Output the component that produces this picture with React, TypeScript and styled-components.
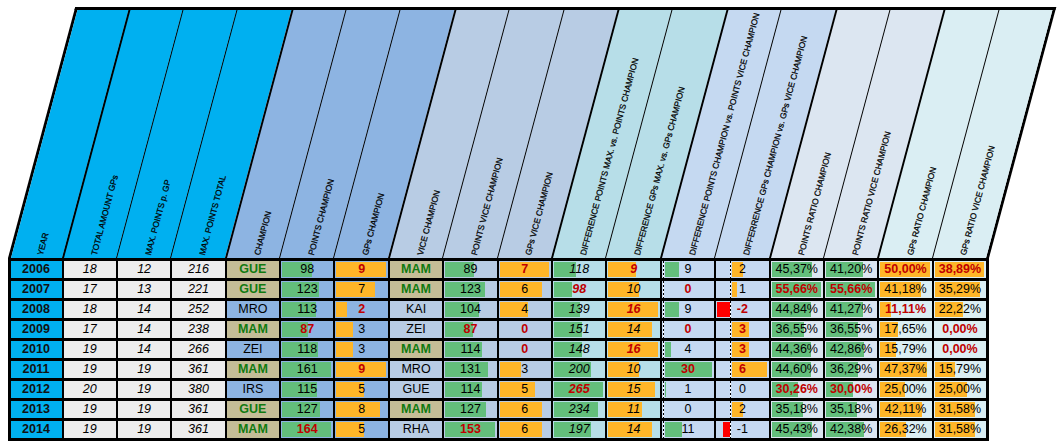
import React from 'react';
import styled, { createGlobalStyle } from 'styled-components';

const GlobalStyle = createGlobalStyle`
  html, body { margin: 0; padding: 0; background: #ffffff; }
  body { font-family: "Liberation Sans", Arial, sans-serif; }
  #root { width: 1060px; height: 448px; }
`;

const COL0 = 51;
const COLW = 52.4;
const GAP = 2;
const PITCH = COLW + GAP;

const GREEN = '#63BE7B';
const ORANGE = '#FFB628';
const RED_BAR = '#FF0000';
const RED_TEXT = '#C00000';
const GREEN_TEXT = '#107A10';
const TAN = '#C4BD97';

type Sep = 'none' | 'thin' | 'thick';
type BarKind = 'green' | 'orange' | 'axisGreen' | 'axisOrange';

interface Column {
  label: string;
  hbg: string;
  bg: string;
  sep: Sep;
  italic?: boolean;
  bold?: boolean;
  bar?: BarKind;
}

const columns: Column[] = [
  { label: 'YEAR', hbg: '#00B0F0', bg: '#00B0F0', sep: 'none', bold: true },
  { label: 'TOTAL AMOUNT GPs', hbg: '#00B0F0', bg: '#EDEDED', sep: 'thick', italic: true },
  { label: 'MAX. POINTS p. GP', hbg: '#00B0F0', bg: '#EDEDED', sep: 'thin', italic: true },
  { label: 'MAX. POINTS TOTAL', hbg: '#00B0F0', bg: '#EDEDED', sep: 'thin', italic: true },
  { label: 'CHAMPION', hbg: '#8DB4E2', bg: '#8DB4E2', sep: 'thick' },
  { label: 'POINTS CHAMPION', hbg: '#8DB4E2', bg: '#8DB4E2', sep: 'thin', bar: 'green' },
  { label: 'GPs CHAMPION', hbg: '#8DB4E2', bg: '#8DB4E2', sep: 'thin', bar: 'orange' },
  { label: 'VICE CHAMPION', hbg: '#B8CCE4', bg: '#B8CCE4', sep: 'thick' },
  { label: 'POINTS VICE CHAMPION', hbg: '#B8CCE4', bg: '#B8CCE4', sep: 'thin', bar: 'green' },
  { label: 'GPs VICE CHAMPION', hbg: '#B8CCE4', bg: '#B8CCE4', sep: 'thin', bar: 'orange' },
  { label: 'DIFFERENCE POINTS MAX. vs. POINTS CHAMPION', hbg: '#B7DEE8', bg: '#B7DEE8', sep: 'thick', italic: true, bar: 'green' },
  { label: 'DIFFERENCE GPs MAX. vs. GPs CHAMPION', hbg: '#B7DEE8', bg: '#B7DEE8', sep: 'thin', italic: true, bar: 'orange' },
  { label: 'DIFFERENCE POINTS CHAMPION vs. POINTS VICE CHAMPION', hbg: '#C5D9F1', bg: '#C5D9F1', sep: 'thick', bar: 'axisGreen' },
  { label: 'DIFFERRENCE GPs CHAMPION vs. GPs VICE CHAMPION', hbg: '#C5D9F1', bg: '#C5D9F1', sep: 'thin', bar: 'axisOrange' },
  { label: 'POINTS RATIO CHAMPION', hbg: '#DCE6F1', bg: '#DCE6F1', sep: 'thick', bar: 'green' },
  { label: 'POINTS RATIO VICE CHAMPION', hbg: '#DCE6F1', bg: '#DCE6F1', sep: 'thin', bar: 'green' },
  { label: 'GPs RATIO CHAMPION', hbg: '#DAEEF3', bg: '#DAEEF3', sep: 'thick', bar: 'orange' },
  { label: 'GPs RATIO VICE CHAMPION', hbg: '#DAEEF3', bg: '#DAEEF3', sep: 'thin', bar: 'orange' },
];

// "*" = red bold value, "#" = highlighted (tan background, green bold) name
const rows: string[][] = [
  ['2006', '18', '12', '216', 'GUE#', '98', '9*', 'MAM#', '89', '7*', '118', '9*', '9', '2', '45,37%', '41,20%', '50,00%*', '38,89%*'],
  ['2007', '17', '13', '221', 'GUE#', '123', '7', 'MAM#', '123', '6', '98*', '10', '0*', '1', '55,66%*', '55,66%*', '41,18%', '35,29%'],
  ['2008', '18', '14', '252', 'MRO', '113', '2*', 'KAI', '104', '4', '139', '16*', '9', '-2*', '44,84%', '41,27%', '11,11%*', '22,22%'],
  ['2009', '17', '14', '238', 'MAM#', '87*', '3', 'ZEI', '87*', '0*', '151', '14', '0*', '3*', '36,55%', '36,55%', '17,65%', '0,00%*'],
  ['2010', '19', '14', '266', 'ZEI', '118', '3', 'MAM#', '114', '0*', '148', '16*', '4', '3*', '44,36%', '42,86%', '15,79%', '0,00%*'],
  ['2011', '19', '19', '361', 'MAM#', '161', '9*', 'MRO', '131', '3', '200', '10', '30*', '6*', '44,60%', '36,29%', '47,37%', '15,79%'],
  ['2012', '20', '19', '380', 'IRS', '115', '5', 'GUE', '114', '5', '265*', '15', '1', '0', '30,26%*', '30,00%*', '25,00%', '25,00%'],
  ['2013', '19', '19', '361', 'GUE#', '127', '8', 'MAM#', '127', '6', '234', '11', '0', '2', '35,18%', '35,18%', '42,11%', '31,58%'],
  ['2014', '19', '19', '361', 'MAM#', '164*', '5', 'RHA', '153*', '6', '197', '14', '11', '-1', '45,43%', '42,38%', '26,32%', '31,58%'],
];

const clean = (raw: string) => raw.replace(/[*#]$/, '');
const toNum = (raw: string) => parseFloat(clean(raw).replace(',', '.').replace('%', ''));

const colMax = columns.map((_, ci) => Math.max(0, ...rows.map((r) => toNum(r[ci]) || 0)));
const colMin = columns.map((_, ci) => Math.min(0, ...rows.map((r) => toNum(r[ci]) || 0)));

/* ---------- layout ---------- */

const Page = styled.div`
  width: 1060px;
  height: 448px;
  box-sizing: border-box;
  padding: 7px 0 0 8px;
  overflow: hidden;
  display: flex;
  flex-direction: column;
  align-items: flex-start;
`;

/* ---------- slanted header ---------- */

const HeaderRow = styled.div`
  display: flex;
  box-sizing: border-box;
  width: ${3 + (COL0 - 0.5) + 17 * PITCH + 3}px;
  height: 251px;
  border: 3px solid #000;
  border-bottom: none;
  transform-origin: 0 100%;
  transform: skewX(-15deg);
`;

const HeaderCell = styled.div<{ $bg: string; $sep: Sep; $first?: boolean }>`
  flex: 0 0 ${(p) => (p.$first ? COL0 - 0.5 : PITCH)}px;
  box-sizing: border-box;
  background: ${(p) => p.$bg};
  border-left: ${(p) => (p.$sep === 'thick' ? 2 : p.$sep === 'thin' ? 1 : 0)}px solid #000;
  display: flex;
  flex-direction: column;
  justify-content: flex-end;
  align-items: center;
  padding-bottom: 3px;
`;

const LabelAnchor = styled.div`
  width: 0;
  height: 0;
  margin-left: 6px;
`;

const LabelText = styled.span`
  display: block;
  width: max-content;
  white-space: nowrap;
  font-size: 8.4px;
  line-height: 10px;
  margin-top: -5px;
  color: #000;
  -webkit-text-stroke: 0.25px #000;
  transform-origin: 0 50%;
  transform: skewX(15deg) rotate(-75deg);
`;

/* ---------- data grid ---------- */

const Grid = styled.div`
  display: grid;
  grid-template-columns: ${COL0}px repeat(17, ${COLW}px);
  grid-auto-rows: 17px;
  column-gap: ${GAP}px;
  row-gap: 3px;
  padding: 3px 2.5px;
  background: #000;
`;

const Cell = styled.div<{ $bg: string }>`
  display: grid;
  grid-template: 1fr / 1fr;
  min-width: 0;
  overflow: hidden;
  background: ${(p) => p.$bg};
  & > * {
    grid-area: 1 / 1;
  }
`;

const BarTrack = styled.div`
  display: flex;
  min-width: 0;
  padding: 0 2px 0 1px;
`;

const Bar = styled.div<{ $color: string }>`
  flex: 0 0 auto;
  margin: 1px 0;
  background: ${(p) => p.$color};
`;

const NegZone = styled.div`
  flex: 0 0 auto;
  display: flex;
  justify-content: flex-end;
`;

const PosZone = styled.div`
  flex: 1 1 auto;
  min-width: 0;
  display: flex;
  padding-left: 1px;
`;

const AxisLine = styled.div`
  flex: 0 0 1px;
  background: repeating-linear-gradient(to bottom, #000 0 2px, #fff 2px 4px);
`;

const Value = styled.span<{ $bold?: boolean; $italic?: boolean; $color: string }>`
  place-self: center;
  font-size: 12.5px;
  line-height: 17px;
  white-space: nowrap;
  font-weight: ${(p) => (p.$bold ? 700 : 400)};
  font-style: ${(p) => (p.$italic ? 'italic' : 'normal')};
  color: ${(p) => p.$color};
`;

function Bars({ kind, value, max, min }: { kind: BarKind; value: number; max: number; min: number }) {
  if (kind === 'green' || kind === 'orange') {
    const pct = max > 0 ? (Math.max(0, value) / max) * 100 : 0;
    return (
      <BarTrack>
        {pct > 0 && <Bar $color={kind === 'green' ? GREEN : ORANGE} style={{ width: `${pct}%` }} />}
      </BarTrack>
    );
  }
  const range = max - min;
  const negFrac = range > 0 ? -min / range : 0;
  const posColor = kind === 'axisGreen' ? GREEN : ORANGE;
  const negPct = value < 0 && min < 0 ? (-value / -min) * 100 : 0;
  const posPct = value > 0 && max > 0 ? (value / max) * 100 : 0;
  return (
    <BarTrack>
      <NegZone style={{ width: `${negFrac * 100}%` }}>
        {negPct > 0 && <Bar $color={RED_BAR} style={{ width: `${negPct}%` }} />}
      </NegZone>
      <AxisLine />
      <PosZone>{posPct > 0 && <Bar $color={posColor} style={{ width: `${posPct}%` }} />}</PosZone>
    </BarTrack>
  );
}

function DataCell({ ci, raw }: { ci: number; raw: string }) {
  const col = columns[ci];
  const red = raw.endsWith('*');
  const hi = raw.endsWith('#');
  const text = clean(raw);
  const bg = hi ? TAN : col.bg;
  const color = red ? RED_TEXT : hi ? GREEN_TEXT : ci === 0 ? '#111111' : '#000000';
  return (
    <Cell $bg={bg}>
      {col.bar && <Bars kind={col.bar} value={toNum(raw)} max={colMax[ci]} min={colMin[ci]} />}
      <Value $bold={red || hi || col.bold} $italic={col.italic} $color={color}>
        {text}
      </Value>
    </Cell>
  );
}

export default function App() {
  return (
    <>
      <GlobalStyle />
      <Page>
        <HeaderRow>
          {columns.map((c, i) => (
            <HeaderCell key={c.label} $bg={c.hbg} $sep={c.sep} $first={i === 0}>
              <LabelAnchor>
                <LabelText>{c.label}</LabelText>
              </LabelAnchor>
            </HeaderCell>
          ))}
        </HeaderRow>
        <Grid>
          {rows.map((r, ri) => r.map((raw, ci) => <DataCell key={`${ri}-${ci}`} ci={ci} raw={raw} />))}
        </Grid>
      </Page>
    </>
  );
}
